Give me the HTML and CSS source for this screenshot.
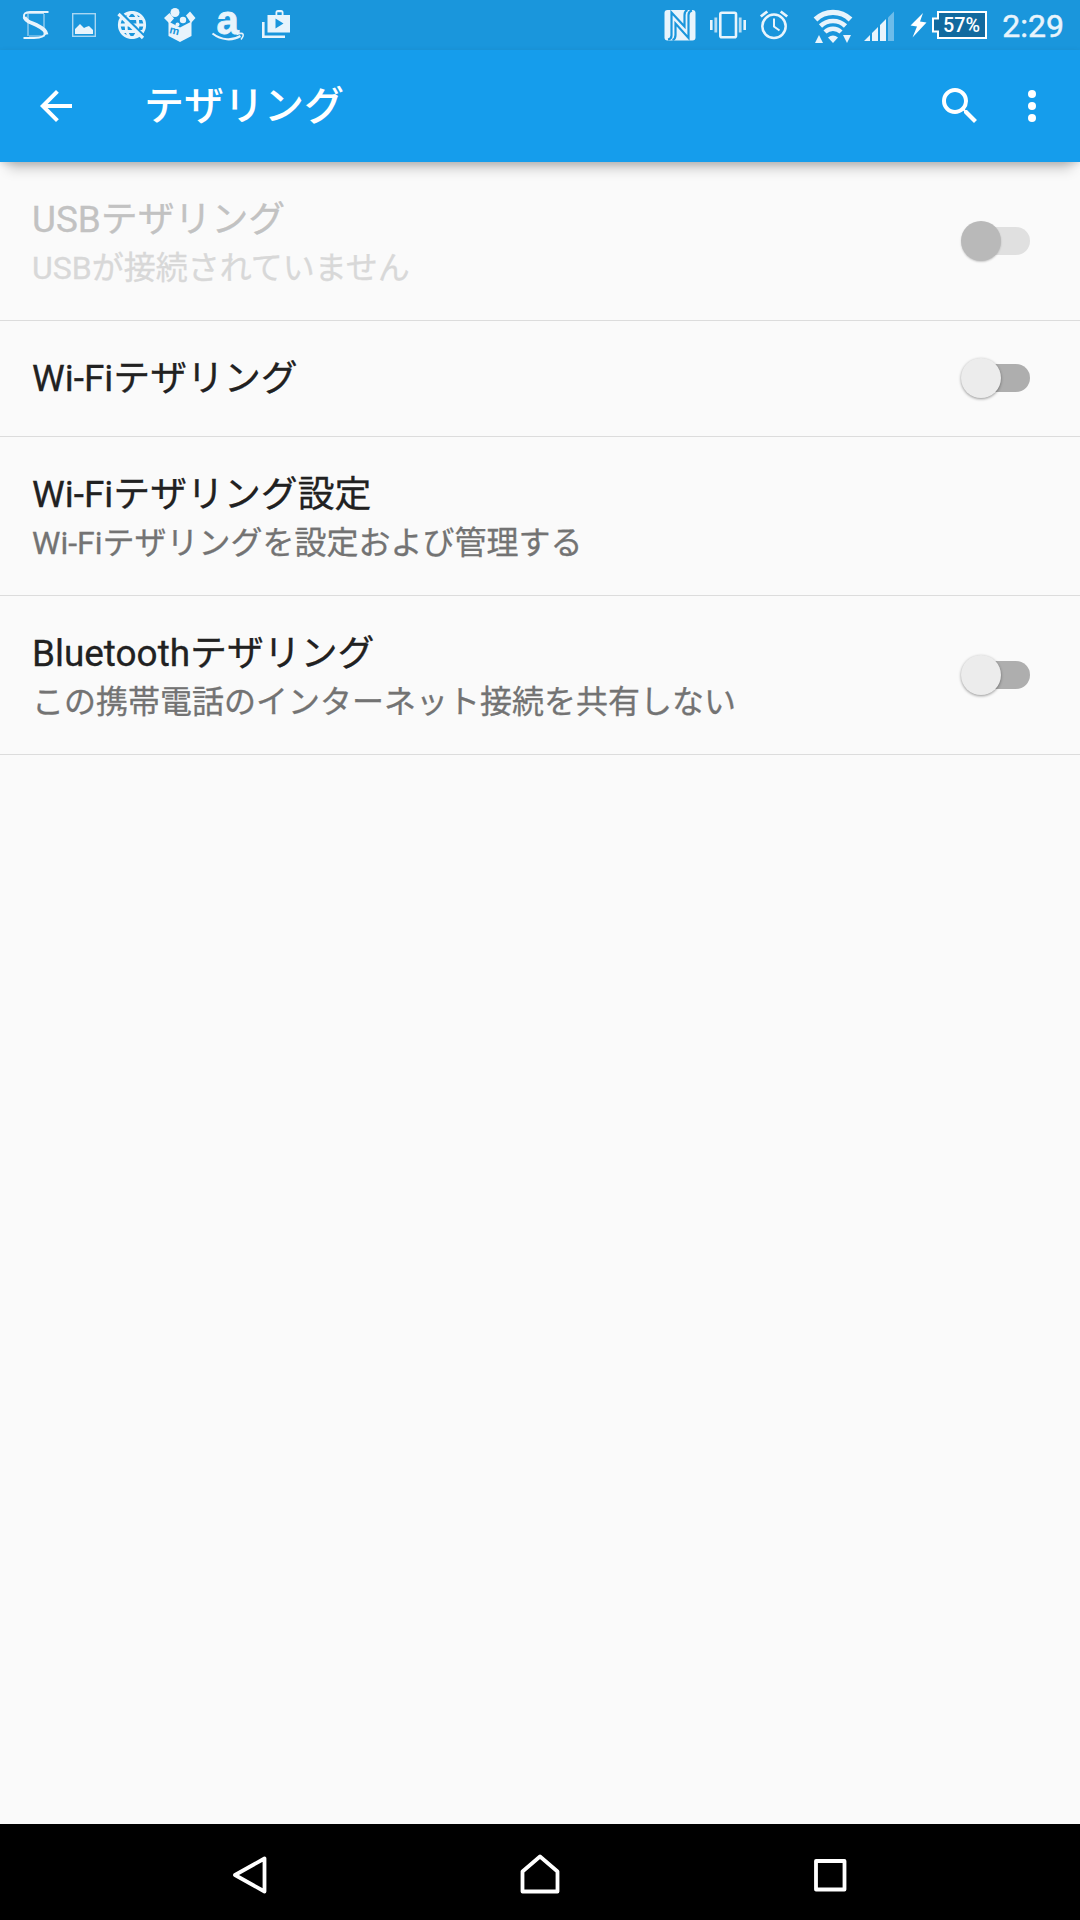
FILE: index.html
```html
<!DOCTYPE html>
<html lang="ja">
<head>
    <meta charset="UTF-8">
    <meta name="viewport" content="width=device-width, initial-scale=1.0">
    <title>テザリング</title>
    <link rel="stylesheet" href="styles.css">
</head>
<body>
    <div class="screen">
        <div class="status-bar">
            <div class="status-icons">
                <!-- scroll -->
                <svg width="44" height="50" viewBox="15 0 44 50">
                    <path d="M28 14v22M44 14v22M26 13.500h18M29 36h16" stroke="#a9d6f2" stroke-width="1.200" fill="none"/>
                    <path d="M48.500 12H30c-5 0-6.500 2-6 5 .5 4 6 5 11 7.500 6 2.500 11 4 10.500 8C45 37 40 38 34 38H23.500" stroke="#e8f4fc" stroke-width="2" fill="none"/>
                    <path d="M24.500 17c1.500 5 7 5.500 12 8 5 2.500 9.500 5 10 9.500" stroke="#e8f4fc" stroke-width="3.800" fill="none"/>
                </svg>
                <!-- image -->
                <svg width="44" height="50" viewBox="59 0 44 50">
                    <rect x="72.700" y="13.700" width="22.600" height="22.600" fill="none" stroke="#a9d6f2" stroke-width="1.400"/>
                    <path d="M75 34v-5l5-5 4 4 2-1 3-1 4 4v4z" fill="#e8f4fc"/>
                </svg>
                <!-- no network -->
                <svg width="54" height="50" viewBox="103 0 54 50">
                    <g fill="none" stroke="#e8f4fc" stroke-width="2.800">
                        <circle cx="132" cy="25" r="12.700"/>
                        <ellipse cx="132" cy="25" rx="6" ry="12.700"/>
                        <path d="M119 25h26M121 18.500h22M121 31.500h22"/>
                    </g>
                    <path d="M120.500 12.500l24 24" stroke="#1a96dc" stroke-width="3"/>
                    <path d="M118.500 14l24.500 24" stroke="#e8f4fc" stroke-width="3.200"/>
                </svg>
                <!-- box -->
                <svg width="50" height="50" viewBox="157 0 50 50">
                    <g fill="#e8f4fc">
                        <path d="M168.500 21.500l11.500 6v14.500l-11.500-6zM191.500 21.500l-11.500 6v14.500l11.500-6z"/>
                        <path d="M164 18l5.500-5 3 3.500 1.500 2-4.500 5zM186 15.500l4-4 5.500 6.500-4.500 5z"/>
                        <circle cx="175" cy="12.500" r="4.500"/>
                        <circle cx="183" cy="20" r="3.200"/>
                        <circle cx="177.500" cy="24.500" r="2"/>
                    </g>
                    <text class="box-letter" x="169" y="34" transform="rotate(14 173 33)">m</text>
                </svg>
                <!-- shopping -->
                <svg width="46" height="50" viewBox="207 0 46 50">
                    <text class="shop-letter" x="216.500" y="33.500">a</text>
                    <path d="M212.500 33.500c9 7 20 7.500 28 2.500" fill="none" stroke="#e8f4fc" stroke-width="2.200"/>
                    <path d="M236.500 34.500c3-1.200 6-1.200 6.500-.3.500 1-.5 3.500-2 5.300" fill="none" stroke="#e8f4fc" stroke-width="1.500"/>
                </svg>
                <!-- play store -->
                <svg width="50" height="50" viewBox="253 0 50 50">
                    <path d="M263.300 22v14.700H285" fill="none" stroke="#e8f4fc" stroke-width="2.600"/>
                    <path fill="#e8f4fc" fill-rule="evenodd" d="M267.500 15h8v-2.500q0-2.500 2.500-2.500h3q2.500 0 2.500 2.500V15h6.500v17.500h-22.500zM277.300 15h4.400v-2.800h-4.400zM275.500 18.500v10l8-5z"/>
                </svg>
            </div>
            <div class="status-icons">
                <!-- nfc -->
                <svg width="44" height="50" viewBox="660 0 44 50">
                    <rect x="664.500" y="10" width="31" height="30.500" rx="3" fill="#e8f4fc"/>
                    <g fill="none" stroke="#1a96dc" stroke-width="2.200">
                        <path d="M668 39.500q3.500-.5 3.500-4V12.500L684.500 26.500V15q0-4 3-5"/>
                        <path d="M692 10.500q-3.500 1-3.500 4.500V38L675.500 23.500V35q0 4-3 5"/>
                    </g>
                </svg>
                <!-- vibrate -->
                <svg width="46" height="50" viewBox="704 0 46 50">
                    <rect x="720.300" y="12.800" width="15.700" height="24.400" rx="1.500" fill="none" stroke="#e8f4fc" stroke-width="2.600"/>
                    <path d="M711.300 20v10M744.700 20v10" stroke="#e8f4fc" stroke-width="2.600"/>
                    <path d="M715.800 17.500v15M740.200 17.500v15" stroke="#b5dcf4" stroke-width="2.800"/>
                </svg>
                <!-- alarm -->
                <svg width="48" height="50" viewBox="750 0 48 50">
                    <g fill="none" stroke="#e8f4fc" stroke-width="2.500">
                        <circle cx="774" cy="26.300" r="11.700"/>
                        <path d="M774 18.500v8l5.500 4" stroke-width="2"/>
                        <path d="M760.800 16.500l6.500-5M787.200 16.500l-6.500-5" stroke-width="2.800"/>
                    </g>
                </svg>
                <!-- wifi -->
                <svg width="60" height="50" viewBox="798 0 60 50">
                    <g fill="none" stroke="#e8f4fc">
                        <path d="M815.500 19.500a25 25 0 0 1 35 0" stroke-width="5.400"/>
                        <path d="M820.500 26a18 18 0 0 1 25 0" stroke-width="4.600"/>
                        <path d="M825 32a11.500 11.500 0 0 1 16 0" stroke-width="4.400"/>
                    </g>
                    <path d="M828 37.500q5-4 10 0l-5 5.500z" fill="#e8f4fc"/>
                    <path d="M815 43l4-8 4 8zM843 35h8l-4 8z" fill="#e8f4fc"/>
                </svg>
                <!-- signal -->
                <svg width="44" height="50" viewBox="858 0 44 50">
                    <path d="M864 41l6-6v6zM872 33l6-6v14h-6zM880 25l6-6v22h-6z" fill="#e8f4fc"/>
                    <path d="M888 17.500l6-6V41h-6z" fill="#6dbcea"/>
                </svg>
                <!-- battery -->
                <svg width="90" height="50" viewBox="902 0 90 50">
                    <path d="M923 13l-12.500 12.500 6.500 1-4.500 11 14-15-6.500-1z" fill="#fff"/>
                    <path d="M938 12h48v26h-48v-6.500h-5v-13h5z" fill="#116a9f" stroke="#fff" stroke-width="2"/>
                    <text class="battery-text" x="943" y="32" textLength="37" lengthAdjust="spacingAndGlyphs">57%</text>
                </svg>
                <div class="clock">2:29</div>
            </div>
        </div>

        <div class="app-bar">
            <svg width="48" height="48" viewBox="0 0 24 24">
                <path d="M20 11H7.830l5.590-5.590L12 4l-8 8 8 8 1.410-1.410L7.830 13H20v-2z" fill="#fff"/>
            </svg>
            <h1 class="app-title">テザリング</h1>
            <svg width="48" height="48" viewBox="0 0 24 24">
                <path d="M15.500 14h-.79l-.28-.27A6.471 6.471 0 0 0 16 9.500 6.500 6.500 0 1 0 9.500 16c1.610 0 3.090-.59 4.230-1.570l.27.28v.79l5 4.990L20.490 19l-4.990-5zm-6 0C7.010 14 5 11.990 5 9.500S7.010 5 9.500 5 14 7.010 14 9.500 11.990 14 9.500 14z" fill="#fff"/>
            </svg>
            <svg class="more" width="48" height="48" viewBox="0 0 24 24" fill="#fff">
                <circle cx="12" cy="6" r="2"/>
                <circle cx="12" cy="12" r="2"/>
                <circle cx="12" cy="18" r="2"/>
            </svg>
        </div>

        <div class="list">
            <div class="item disabled">
                <div class="item-text">
                    <div class="item-title">USBテザリング</div>
                    <div class="item-summary">USBが接続されていません</div>
                </div>
                <div class="switch"><div class="thumb"></div></div>
            </div>
            <div class="item">
                <div class="item-text">
                    <div class="item-title">Wi-Fiテザリング</div>
                </div>
                <div class="switch"><div class="thumb"></div></div>
            </div>
            <div class="item">
                <div class="item-text">
                    <div class="item-title">Wi-Fiテザリング設定</div>
                    <div class="item-summary">Wi-Fiテザリングを設定および管理する</div>
                </div>
            </div>
            <div class="item">
                <div class="item-text">
                    <div class="item-title">Bluetoothテザリング</div>
                    <div class="item-summary">この携帯電話のインターネット接続を共有しない</div>
                </div>
                <div class="switch"><div class="thumb"></div></div>
            </div>
        </div>

        <div class="nav-bar">
            <svg width="60" height="60" viewBox="0 0 60 60">
                <path d="M44.500 14.500v33L15 31z"/>
            </svg>
            <svg width="60" height="60" viewBox="0 0 60 60">
                <path d="M12.500 47.500V27.500L30 12.500l17.500 15v20z"/>
            </svg>
            <svg width="60" height="60" viewBox="0 0 60 60">
                <path d="M16 17h28.500v28.500H16z"/>
            </svg>
        </div>
    </div>
</body>
</html>
```
FILE: styles.css
```css
* {
    margin: 0;
    padding: 0;
    box-sizing: border-box;
}

body {
    font-family: Roboto, "Noto Sans CJK JP", sans-serif;
    background: #fafafa;
    color: #212121;
}

svg {
    display: block;
    flex: none;
}

.screen {
    display: flex;
    flex-direction: column;
    width: 1080px;
    height: 1920px;
    overflow: hidden;
}

/* Status bar */
.status-bar {
    display: flex;
    justify-content: space-between;
    height: 50px;
    padding: 0 16px 0 15px;
    background: #1a96dc;
}

.status-icons {
    display: flex;
}

.clock {
    margin-left: 10px;
    font-size: 32px;
    line-height: 52px;
    color: #e8f4fc;
    -webkit-text-stroke: 0.5px #e8f4fc;
}

.battery-text {
    font: 500 20px Roboto, sans-serif;
    fill: #fff;
}

.shop-letter {
    font: bold 40px "Liberation Sans", sans-serif;
    fill: #e8f4fc;
    stroke: #e8f4fc;
    stroke-width: 0.8;
}

.box-letter {
    font: bold 11px Roboto, sans-serif;
    fill: #1a96dc;
}

/* App bar */
.app-bar {
    display: flex;
    align-items: center;
    position: relative;
    z-index: 1;
    height: 112px;
    padding: 0 24px 0 32px;
    background: #159dec;
    box-shadow: 0 2px 6px rgba(0, 0, 0, 0.12), 0 14px 12px -8px rgba(0, 0, 0, 0.22);
}

.app-title {
    flex: 1;
    margin-left: 64px;
    padding-top: 2px;
    font-size: 40px;
    font-weight: 500;
    line-height: 48px;
    color: #fff;
}

.more {
    margin-left: 24px;
}

/* Settings list */
.list {
    flex: 1;
}

.item {
    display: flex;
    justify-content: space-between;
    align-items: center;
    padding: 37px 50px 36px 32px;
    border-bottom: 1px solid #dcdcdc;
}

.item-title {
    font-size: 36.9px;
    line-height: 42px;
    -webkit-text-stroke: 0.3px;
}

.item-summary {
    margin-top: 9px;
    margin-bottom: -3px;
    font-size: 32px;
    line-height: 37px;
    color: #737373;
    -webkit-text-stroke: 0.3px;
}

.disabled .item-title {
    color: #c2c2c2;
}

.disabled .item-summary {
    color: #d8d8d8;
}

.switch {
    display: flex;
    align-items: center;
    width: 68px;
    height: 28px;
    margin-bottom: 2px;
    border-radius: 14px;
    background: #aeaeae;
}

.thumb {
    width: 40px;
    height: 40px;
    margin-left: -1px;
    flex: none;
    border-radius: 50%;
    background: #ececec;
    box-shadow: 0 1px 3px rgba(0, 0, 0, 0.4);
}

.disabled .switch {
    background: #e0e0e0;
}

.disabled .thumb {
    background: #b9b9b9;
    box-shadow: 0 1px 2px rgba(0, 0, 0, 0.2);
}

/* Navigation bar */
.nav-bar {
    display: flex;
    justify-content: center;
    align-items: center;
    gap: 230px;
    height: 96px;
    padding-top: 4px;
    background: #000;
}

.nav-bar svg {
    fill: none;
    stroke: #fff;
    stroke-width: 3.8;
    stroke-linejoin: round;
}
```
